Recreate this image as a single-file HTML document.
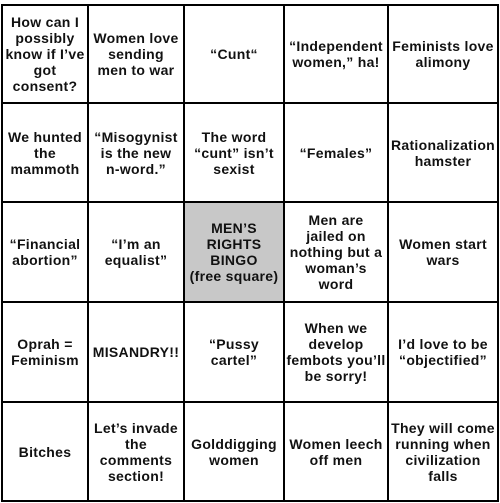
<!DOCTYPE html>
<html><head><style>
body{margin:0;width:500px;height:503px;background:#fff;position:relative;overflow:hidden;font-family:"Liberation Sans",Arial,sans-serif;}
.c{position:absolute;display:flex;align-items:center;justify-content:center;text-align:center;font-weight:bold;font-size:14px;letter-spacing:0.3px;line-height:16px;color:#111;white-space:nowrap;}
.l{position:absolute;background:#000;}
</style></head><body>
<div class="c" style="left:184px;top:203px;width:99px;height:99px;background:#c8c8c8"></div>
<div class="l" style="left:1px;top:4px;width:2px;height:498px"></div>
<div class="l" style="left:87px;top:4px;width:2px;height:498px"></div>
<div class="l" style="left:183px;top:4px;width:2px;height:498px"></div>
<div class="l" style="left:283px;top:4px;width:2px;height:498px"></div>
<div class="l" style="left:387px;top:4px;width:2px;height:498px"></div>
<div class="l" style="left:497px;top:4px;width:2px;height:498px"></div>
<div class="l" style="left:1px;top:4px;width:498px;height:2px"></div>
<div class="l" style="left:1px;top:102px;width:498px;height:2px"></div>
<div class="l" style="left:1px;top:201px;width:498px;height:2px"></div>
<div class="l" style="left:1px;top:301px;width:498px;height:2px"></div>
<div class="l" style="left:1px;top:401px;width:498px;height:2px"></div>
<div class="l" style="left:1px;top:500px;width:498px;height:2px"></div>

<div class="c" style="left:3px;top:6px;width:84px;height:96px">How can I<br>possibly<br>know if I’ve<br>got<br>consent?</div>
<div class="c" style="left:89px;top:6px;width:94px;height:96px">Women love<br>sending<br>men to war</div>
<div class="c" style="left:185px;top:6px;width:98px;height:96px">“Cunt“</div>
<div class="c" style="left:285px;top:6px;width:102px;height:96px">“Independent<br>women,” ha!</div>
<div class="c" style="left:389px;top:6px;width:108px;height:96px">Feminists love<br>alimony</div>

<div class="c" style="left:3px;top:104px;width:84px;height:97px">We hunted<br>the<br>mammoth</div>
<div class="c" style="left:89px;top:104px;width:94px;height:97px">“Misogynist<br>is the new<br>n-word.”</div>
<div class="c" style="left:185px;top:104px;width:98px;height:97px">The word<br>“cunt” isn’t<br>sexist</div>
<div class="c" style="left:285px;top:104px;width:102px;height:97px">“Females”</div>
<div class="c" style="left:389px;top:104px;width:108px;height:97px">Rationalization<br>hamster</div>

<div class="c" style="left:3px;top:203px;width:84px;height:98px">“Financial<br>abortion”</div>
<div class="c" style="left:89px;top:203px;width:94px;height:98px">“I’m an<br>equalist”</div>
<div class="c" style="left:185px;top:203px;width:98px;height:98px">MEN’S<br>RIGHTS<br>BINGO<br>(free square)</div>
<div class="c" style="left:285px;top:203px;width:102px;height:98px">Men are<br>jailed on<br>nothing but a<br>woman’s<br>word</div>
<div class="c" style="left:389px;top:203px;width:108px;height:98px">Women start<br>wars</div>

<div class="c" style="left:3px;top:303px;width:84px;height:98px">Oprah =<br>Feminism</div>
<div class="c" style="left:89px;top:303px;width:94px;height:98px">MISANDRY!!</div>
<div class="c" style="left:185px;top:303px;width:98px;height:98px">“Pussy<br>cartel”</div>
<div class="c" style="left:285px;top:303px;width:102px;height:98px">When we<br>develop<br>fembots you’ll<br>be sorry!</div>
<div class="c" style="left:389px;top:303px;width:108px;height:98px">I’d love to be<br>“objectified”</div>

<div class="c" style="left:3px;top:403px;width:84px;height:97px">Bitches</div>
<div class="c" style="left:89px;top:403px;width:94px;height:97px">Let’s invade<br>the<br>comments<br>section!</div>
<div class="c" style="left:185px;top:403px;width:98px;height:97px">Golddigging<br>women</div>
<div class="c" style="left:285px;top:403px;width:102px;height:97px">Women leech<br>off men</div>
<div class="c" style="left:389px;top:403px;width:108px;height:97px">They will come<br>running when<br>civilization<br>falls</div>
</body></html>
